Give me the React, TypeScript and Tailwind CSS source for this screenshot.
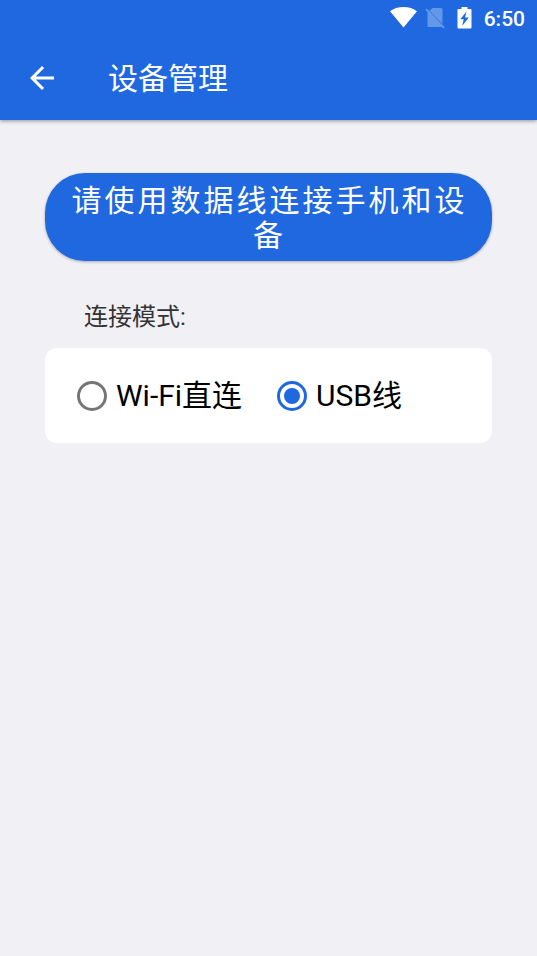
import React, { useState } from 'react';

type ConnectionMode = 'wifi' | 'usb';

const modes: { value: ConnectionMode; label: string }[] = [
  { value: 'wifi', label: 'Wi-Fi直连' },
  { value: 'usb', label: 'USB线' },
];

const StatusBar: React.FC = () => (
  <div className="flex h-9 items-center justify-end pr-3 text-white">
    <svg className="mr-2 h-[22px] w-[27px]" viewBox="0 0 27 22" fill="currentColor" aria-hidden="true">
      <path d="M0 4.3C3.6 1.4 8.2 0 13.5 0S23.4 1.4 27 4.3L13.5 20.5z" />
    </svg>
    <svg className="mr-3 h-[22px] w-5" viewBox="0 0 20 22" fill="#6297e9" aria-hidden="true">
      <path d="M7.5 1H16Q17.5 1 17.5 2.5V17L4.5 3.8z" />
      <path d="M.4 2.8L1.8 1.4L19.8 20.2L18.4 21.6L16.6 19.8Q16.2 20 15.6 20H4Q2.5 20 2.5 18.5V5z" />
    </svg>
    <svg className="mr-3 h-[22px] w-[15px]" viewBox="0 0 15 22" fill="currentColor" aria-hidden="true">
      <path
        fillRule="evenodd"
        d="M4.5 0h6v2H13.5Q14.5 2 14.5 3V20.5Q14.5 21.5 13.5 21.5H1.5Q.5 21.5 .5 20.5V3Q.5 2 1.5 2H4.5zM9.5 4.5L3.3 12.3H6.7L5.2 19L11.7 10.6H8z"
      />
    </svg>
    <span className="pt-[2px] text-[21px] font-medium leading-9">6:50</span>
  </div>
);

const DeviceManagement: React.FC = () => {
  const [mode, setMode] = useState<ConnectionMode>('usb');

  return (
    <div className="min-h-screen bg-[#f0f0f5] font-[Roboto,'Noto_Sans_CJK_SC',sans-serif]">
      <header className="bg-[#1f68e0] shadow-[0_1px_4px_rgba(0,0,0,0.4)]">
        <StatusBar />
        <div className="flex h-[84px] items-center pl-[30px] text-white">
          <button type="button" aria-label="返回" className="mr-[54px]">
            <svg className="h-6 w-6" viewBox="4 4 16 16" fill="currentColor" aria-hidden="true">
              <path d="M20 11H7.83l5.59-5.59L12 4l-8 8 8 8 1.41-1.41L7.83 13H20v-2z" />
            </svg>
          </button>
          <h1 className="pt-[2px] text-[30px] leading-10">设备管理</h1>
        </div>
      </header>

      <main className="px-[45px] pt-[53px]">
        <button
          type="button"
          className="block w-full rounded-[40px] bg-[#1f68e0] pt-[10px] pr-6 pb-2 pl-[26px] text-[30px] leading-[35px] tracking-widest text-white shadow-[0_1px_3px_rgba(0,0,0,0.3)]"
        >
          请使用数据线连接手机和设备
        </button>

        <fieldset className="mt-10">
          <legend className="pb-[15px] pl-[39px] text-2xl leading-8 text-[#333333]">连接模式:</legend>
          <div className="flex gap-[35px] rounded-xl bg-white px-8 pt-7 pb-[27px]">
            {modes.map(({ value, label }) => (
              <label key={value} className="flex items-center gap-[9px] text-[30px] leading-10 text-black">
                <input
                  type="radio"
                  name="connection-mode"
                  value={value}
                  checked={mode === value}
                  onChange={() => setMode(value)}
                  className="flex size-[30px] shrink-0 appearance-none items-center justify-center rounded-full border-3 border-[#757575] before:size-4 before:rounded-full checked:border-[#1f68e0] checked:before:bg-[#1f68e0]"
                />
                {label}
              </label>
            ))}
          </div>
        </fieldset>
      </main>
    </div>
  );
};

export default DeviceManagement;
